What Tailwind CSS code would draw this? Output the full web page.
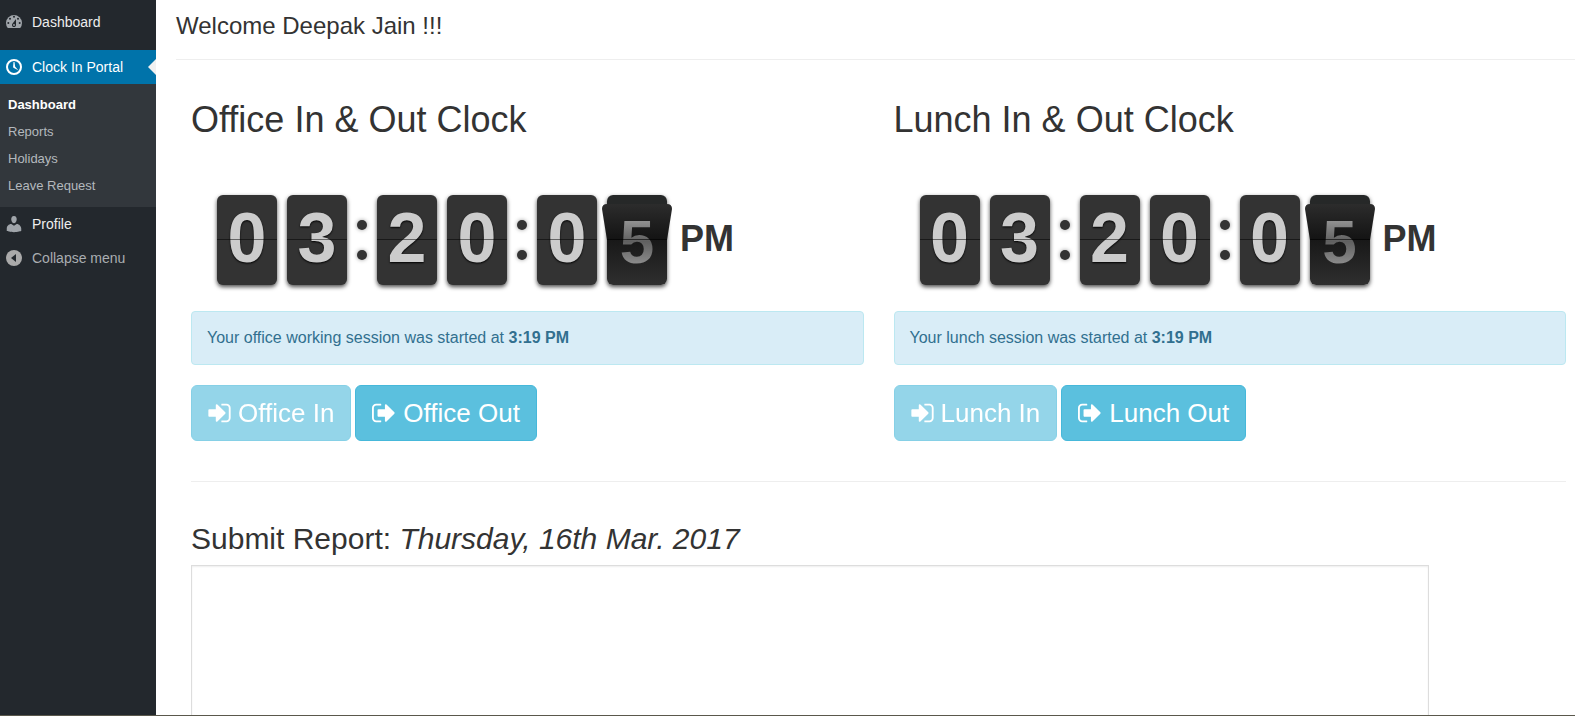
<!DOCTYPE html>
<html lang="en">
<head>
<meta charset="utf-8">
<meta name="viewport" content="width=device-width, initial-scale=1">
<title>Clock In Portal</title>
<script src="https://cdn.jsdelivr.net/npm/@tailwindcss/browser@4"></script>
</head>
<body class="flex h-screen flex-col overflow-hidden bg-white font-['Liberation_Sans',Arial,sans-serif] text-[#333]">

<svg class="hidden" aria-hidden="true">
  <symbol id="sign-in" viewBox="0 0 1536 1792"><path d="M1184 896q0 26-19 45l-544 544q-19 19-45 19t-45-19-19-45v-288h-448q-26 0-45-19t-19-45v-384q0-26 19-45t45-19h448v-288q0-26 19-45t45-19 45 19l544 544q19 19 19 45zM1536 544v704q0 119-84.500 203.500t-203.500 84.500h-320q-13 0-22.500-9.500t-9.500-22.500q0-4-1-20t-.5-26.500 3-23.500 10-19.500 20.500-6.500h320q66 0 113-47t47-113v-704q0-66-47-113t-113-47h-312l-11.500-1-11.500-3-8-5.500-7-9-2-13.500q0-4-1-20t-.5-26.500 3-23.500 10-19.500 20.500-6.500h320q119 0 203.500 84.500t84.500 203.500z"/></symbol>
  <symbol id="sign-out" viewBox="0 0 1664 1792"><path d="M640 1440q0 4 1 20t.5 26.500-3 23.500-10 19.500-20.500 6.500h-320q-119 0-203.500-84.500t-84.500-203.500v-704q0-119 84.500-203.500t203.500-84.500h320q13 0 22.500 9.500t9.500 22.500q0 4 1 20t.5 26.500-3 23.500-10 19.500-20.500 6.500h-320q-66 0-113 47t-47 113v704q0 66 47 113t113 47h312l11.500 1 11.500 3 8 5.500 7 9 2 13.500zM1568 896q0 26-19 45l-544 544q-19 19-45 19t-45-19-19-45v-288h-448q-26 0-45-19t-19-45v-384q0-26 19-45t45-19h448v-288q0-26 19-45t45-19 45 19l544 544q19 19 19 45z"/></symbol>
</svg>

<div class="flex min-h-0 flex-1">
  <nav class="w-[156px] shrink-0 bg-[#23282d] pt-[5px] text-sm text-[#eee]" aria-label="Main menu">
    <a href="#" class="flex h-[34px] items-center gap-2 pl-1">
      <svg class="size-5" viewBox="0 0 20 20" aria-hidden="true">
        <path fill="#a0a5aa" d="M3.760 16h12.480A8 8 0 1 0 3.760 16z"/>
        <g fill="#23282d"><circle cx="10" cy="4.800" r="1"/><circle cx="6" cy="6.700" r="1"/><circle cx="14" cy="6.700" r="1"/><circle cx="4.300" cy="11" r="1"/><circle cx="15.700" cy="11" r="1"/><path d="M12 7v6a2 2 0 1 1-3.400-1.400z"/></g>
        <circle cx="10" cy="13" r=".9" fill="#a0a5aa"/>
      </svg>
      Dashboard
    </a>
    <a href="#" class="mt-[11px] flex h-[34px] items-center gap-2 bg-[#0073aa] pl-1 text-white">
      <svg class="size-5" viewBox="0 0 20 20" aria-hidden="true"><circle cx="10" cy="10" r="7" fill="none" stroke="#fff" stroke-width="2"/><path fill="#fff" d="M9.500 5h1l.6 4.400 3.200 3.900-4.400-2.200q-1-.5-.8-1.700z"/></svg>
      Clock In Portal
      <svg class="ml-auto h-4 w-2 fill-[#f1f1f1]" viewBox="0 0 8 16" aria-hidden="true"><path d="M8 0v16L0 8z"/></svg>
    </a>
    <ul class="bg-[#32373c] pt-[7px] pb-2 text-[13px] leading-[27px] text-[#b4b9be]">
      <li><a href="#" class="block pl-2 font-bold text-white">Dashboard</a></li>
      <li><a href="#" class="block pl-2">Reports</a></li>
      <li><a href="#" class="block pl-2">Holidays</a></li>
      <li><a href="#" class="block pl-2">Leave Request</a></li>
    </ul>
    <a href="#" class="flex h-[34px] items-center gap-2 pl-1">
      <svg class="size-5 fill-[#a0a5aa]" viewBox="0 0 20 20" aria-hidden="true"><path d="M10 9.250c-2.270 0-2.730-3.440-2.730-3.440C7 4.020 7.820 2 9.970 2c2.160 0 2.980 2.020 2.710 3.810 0 0-.41 3.440-2.680 3.440zm0 2.570L12.720 10c2.390 0 4.520 2.330 4.520 4.530v2.490s-3.650 1.130-7.240 1.130c-3.650 0-7.240-1.130-7.240-1.130v-2.490c0-2.250 1.940-4.480 4.470-4.480z"/></svg>
      Profile
    </a>
    <button type="button" class="flex h-[34px] w-full items-center gap-2 pl-1 text-[#a9adb1]">
      <svg class="size-5" viewBox="0 0 20 20" aria-hidden="true"><circle cx="10" cy="10" r="8" fill="#aaa"/><path d="M12 6v8l-5-4z" fill="#23282d"/></svg>
      Collapse menu
    </button>
  </nav>

  <main class="min-w-0 flex-1 overflow-hidden pl-5">
    <h1 class="pt-3 pb-[19px] text-2xl leading-7">Welcome Deepak Jain !!!</h1>
    <hr class="border-[#eee]">
    <div class="pr-[9px] pl-[15px]">
      <div class="grid grid-cols-2 gap-[30px] pt-10">

        <section>
          <h2 class="text-4xl leading-10">Office In &amp; Out Clock</h2>
          <div class="mt-[55px] ml-[26px] flex h-[90px] items-center gap-[10px] text-[70px] leading-[87px] font-bold text-[#ccc]" role="timer" aria-label="03:20:05 PM">
            <div class="relative h-[90px] w-[60px] rounded-md bg-[#333] text-center shadow-[0_2px_4px_rgba(0,0,0,0.7)] [text-shadow:0_1px_2px_#000]">0<i class="absolute inset-x-0 top-[44px] h-px bg-black/50"></i></div>
            <div class="relative h-[90px] w-[60px] rounded-md bg-[#333] text-center shadow-[0_2px_4px_rgba(0,0,0,0.7)] [text-shadow:0_1px_2px_#000]">3<i class="absolute inset-x-0 top-[44px] h-px bg-black/50"></i></div>
            <div class="flex w-[10px] flex-col gap-5"><i class="size-[10px] rounded-full bg-[#333] shadow-[0_0_4px_rgba(0,0,0,0.4)]"></i><i class="size-[10px] rounded-full bg-[#333] shadow-[0_0_4px_rgba(0,0,0,0.4)]"></i></div>
            <div class="relative h-[90px] w-[60px] rounded-md bg-[#333] text-center shadow-[0_2px_4px_rgba(0,0,0,0.7)] [text-shadow:0_1px_2px_#000]">2<i class="absolute inset-x-0 top-[44px] h-px bg-black/50"></i></div>
            <div class="relative h-[90px] w-[60px] rounded-md bg-[#333] text-center shadow-[0_2px_4px_rgba(0,0,0,0.7)] [text-shadow:0_1px_2px_#000]">0<i class="absolute inset-x-0 top-[44px] h-px bg-black/50"></i></div>
            <div class="flex w-[10px] flex-col gap-5"><i class="size-[10px] rounded-full bg-[#333] shadow-[0_0_4px_rgba(0,0,0,0.4)]"></i><i class="size-[10px] rounded-full bg-[#333] shadow-[0_0_4px_rgba(0,0,0,0.4)]"></i></div>
            <div class="relative h-[90px] w-[60px] rounded-md bg-[#333] text-center shadow-[0_2px_4px_rgba(0,0,0,0.7)] [text-shadow:0_1px_2px_#000]">0<i class="absolute inset-x-0 top-[44px] h-px bg-black/50"></i></div>
            <!-- Seconds card with its upper flap falling -->
            <div class="relative h-[90px] w-[60px] rounded-md bg-linear-to-b from-[#262828] from-50% via-[#181818] via-50% to-[#2f2f2f] text-center shadow-[0_2px_4px_rgba(0,0,0,0.7)]">
              <svg class="absolute -left-[5px] top-[9px] h-9 w-[70px]" viewBox="0 0 70 36" aria-hidden="true"><defs><linearGradient id="flap" x2="0" y2="1"><stop stop-color="#2c2c2c"/><stop offset="1" stop-color="#131313"/></linearGradient></defs><path fill="url(#flap)" d="M0 5Q0 0 5 0H65Q70 0 70 5L65 36H5z"/></svg>
              <span class="relative block bg-linear-to-b from-[#999] from-25% via-[#606060] via-50% to-[#a0a0a0] to-85% bg-clip-text text-[62px] leading-[93px] text-transparent">5</span>
              <i class="absolute inset-x-0 top-[44px] h-px bg-black/60"></i>
            </div>
            <span class="self-start pl-[3px] text-4xl leading-[88px] text-[#333]">PM</span>
          </div>
          <p class="mt-[26px] rounded border border-[#bce8f1] bg-[#d9edf7] p-[15px] text-base leading-[22px] text-[#31708f]" role="status">Your office working session was started at <strong>3:19 PM</strong></p>
          <div class="mt-5 flex gap-1 text-[26px] leading-[34px] text-white">
            <button type="button" disabled class="flex items-center gap-[7px] rounded-md border border-[#46b8da] bg-[#5bc0de] px-4 py-[10px] opacity-65"><svg class="h-[26px] w-[23px] fill-current" aria-hidden="true"><use href="#sign-in"/></svg>Office In</button>
            <button type="button" class="flex items-center gap-[7px] rounded-md border border-[#46b8da] bg-[#5bc0de] px-4 py-[10px]"><svg class="h-[26px] w-6 fill-current" aria-hidden="true"><use href="#sign-out"/></svg>Office Out</button>
          </div>
        </section>

        <section>
          <h2 class="text-4xl leading-10">Lunch In &amp; Out Clock</h2>
          <div class="mt-[55px] ml-[26px] flex h-[90px] items-center gap-[10px] text-[70px] leading-[87px] font-bold text-[#ccc]" role="timer" aria-label="03:20:05 PM">
            <div class="relative h-[90px] w-[60px] rounded-md bg-[#333] text-center shadow-[0_2px_4px_rgba(0,0,0,0.7)] [text-shadow:0_1px_2px_#000]">0<i class="absolute inset-x-0 top-[44px] h-px bg-black/50"></i></div>
            <div class="relative h-[90px] w-[60px] rounded-md bg-[#333] text-center shadow-[0_2px_4px_rgba(0,0,0,0.7)] [text-shadow:0_1px_2px_#000]">3<i class="absolute inset-x-0 top-[44px] h-px bg-black/50"></i></div>
            <div class="flex w-[10px] flex-col gap-5"><i class="size-[10px] rounded-full bg-[#333] shadow-[0_0_4px_rgba(0,0,0,0.4)]"></i><i class="size-[10px] rounded-full bg-[#333] shadow-[0_0_4px_rgba(0,0,0,0.4)]"></i></div>
            <div class="relative h-[90px] w-[60px] rounded-md bg-[#333] text-center shadow-[0_2px_4px_rgba(0,0,0,0.7)] [text-shadow:0_1px_2px_#000]">2<i class="absolute inset-x-0 top-[44px] h-px bg-black/50"></i></div>
            <div class="relative h-[90px] w-[60px] rounded-md bg-[#333] text-center shadow-[0_2px_4px_rgba(0,0,0,0.7)] [text-shadow:0_1px_2px_#000]">0<i class="absolute inset-x-0 top-[44px] h-px bg-black/50"></i></div>
            <div class="flex w-[10px] flex-col gap-5"><i class="size-[10px] rounded-full bg-[#333] shadow-[0_0_4px_rgba(0,0,0,0.4)]"></i><i class="size-[10px] rounded-full bg-[#333] shadow-[0_0_4px_rgba(0,0,0,0.4)]"></i></div>
            <div class="relative h-[90px] w-[60px] rounded-md bg-[#333] text-center shadow-[0_2px_4px_rgba(0,0,0,0.7)] [text-shadow:0_1px_2px_#000]">0<i class="absolute inset-x-0 top-[44px] h-px bg-black/50"></i></div>
            <div class="relative h-[90px] w-[60px] rounded-md bg-linear-to-b from-[#262828] from-50% via-[#181818] via-50% to-[#2f2f2f] text-center shadow-[0_2px_4px_rgba(0,0,0,0.7)]">
              <svg class="absolute -left-[5px] top-[9px] h-9 w-[70px]" viewBox="0 0 70 36" aria-hidden="true"><path fill="url(#flap)" d="M0 5Q0 0 5 0H65Q70 0 70 5L65 36H5z"/></svg>
              <span class="relative block bg-linear-to-b from-[#999] from-25% via-[#606060] via-50% to-[#a0a0a0] to-85% bg-clip-text text-[62px] leading-[93px] text-transparent">5</span>
              <i class="absolute inset-x-0 top-[44px] h-px bg-black/60"></i>
            </div>
            <span class="self-start pl-[3px] text-4xl leading-[88px] text-[#333]">PM</span>
          </div>
          <p class="mt-[26px] rounded border border-[#bce8f1] bg-[#d9edf7] p-[15px] text-base leading-[22px] text-[#31708f]" role="status">Your lunch session was started at <strong>3:19 PM</strong></p>
          <div class="mt-5 flex gap-1 text-[26px] leading-[34px] text-white">
            <button type="button" disabled class="flex items-center gap-[7px] rounded-md border border-[#46b8da] bg-[#5bc0de] px-4 py-[10px] opacity-65"><svg class="h-[26px] w-[23px] fill-current" aria-hidden="true"><use href="#sign-in"/></svg>Lunch In</button>
            <button type="button" class="flex items-center gap-[7px] rounded-md border border-[#46b8da] bg-[#5bc0de] px-4 py-[10px]"><svg class="h-[26px] w-6 fill-current" aria-hidden="true"><use href="#sign-out"/></svg>Lunch Out</button>
          </div>
        </section>
      </div>

      <hr class="mt-10 border-[#eee]">
      <label for="report" class="mt-10 block text-3xl leading-[34px]">Submit Report: <em>Thursday, 16th Mar. 2017</em></label>
      <textarea id="report" rows="10" class="mt-[9px] block w-9/10 resize-none border border-[#ddd] bg-white p-2 text-base shadow-[inset_0_1px_2px_rgba(0,0,0,0.07)]"></textarea>
    </div>
  </main>
</div>
<div class="h-px shrink-0 bg-[#5a584c]"></div>
</body>
</html>
